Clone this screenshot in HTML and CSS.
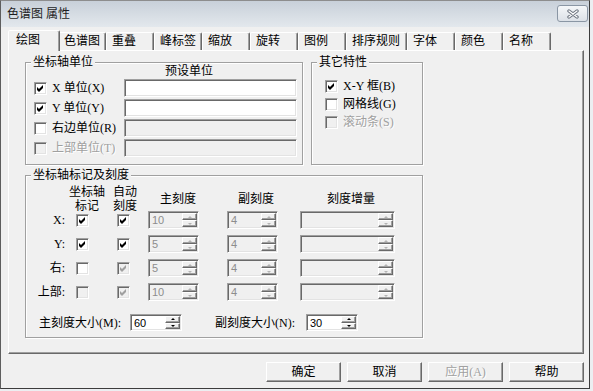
FILE: index.html
```html
<!DOCTYPE html>
<html lang="zh-CN">
<head>
    <meta charset="UTF-8">
    <title>色谱图 属性</title>
    <link rel="stylesheet" href="styles.css">
</head>
<body>
<div class="window">
    <div class="frame">
        <div class="titlebar">
            <span class="title">色谱图 属性</span>
            <button class="close" title="关闭">
                <svg width="14" height="10" viewBox="0 0 14 10">
                    <path d="M3 2 L11 8 M11 2 L3 8" stroke="#6d7580" stroke-width="3.4" stroke-linecap="round"/>
                    <path d="M3 2 L11 8 M11 2 L3 8" stroke="#fff" stroke-width="1.3" stroke-linecap="round"/>
                </svg>
            </button>
        </div>

        <div class="content">
            <div class="tabs">
                <span class="tab active">绘图</span>
                <span class="tab">色谱图</span>
                <span class="tab">重叠</span>
                <span class="tab">峰标签</span>
                <span class="tab">缩放</span>
                <span class="tab">旋转</span>
                <span class="tab">图例</span>
                <span class="tab wide">排序规则</span>
                <span class="tab">字体</span>
                <span class="tab">颜色</span>
                <span class="tab">名称</span>
            </div>

            <div class="panel">
                <div class="top-row">
                    <!-- 坐标轴单位 -->
                    <div class="group units">
                        <div class="group-title">坐标轴单位</div>
                        <div class="units-body">
                            <span class="col-head">预设单位</span>
                            <label class="check"><span class="box"><svg class="tick" viewBox="0 0 11 11"><polygon points="2,4 4,6 8,2 8,5 4,9 2,7"/></svg></span>X 单位(X)</label>
                            <span class="field"></span>
                            <label class="check"><span class="box"><svg class="tick" viewBox="0 0 11 11"><polygon points="2,4 4,6 8,2 8,5 4,9 2,7"/></svg></span>Y 单位(Y)</label>
                            <span class="field"></span>
                            <label class="check"><span class="box"></span>右边单位(R)</label>
                            <span class="field off"></span>
                            <label class="check off"><span class="box off"></span>上部单位(T)</label>
                            <span class="field off"></span>
                        </div>
                    </div>

                    <!-- 其它特性 -->
                    <div class="group other">
                        <div class="group-title">其它特性</div>
                        <div class="other-body">
                            <label class="check"><span class="box"><svg class="tick" viewBox="0 0 11 11"><polygon points="2,4 4,6 8,2 8,5 4,9 2,7"/></svg></span>X-Y 框(B)</label>
                            <label class="check"><span class="box"></span>网格线(G)</label>
                            <label class="check off"><span class="box off"></span>滚动条(S)</label>
                        </div>
                    </div>
                </div>

                <!-- 坐标轴标记及刻度 -->
                <div class="group ticks">
                    <div class="group-title">坐标轴标记及刻度</div>
                    <div class="ticks-body">
                        <span></span>
                        <span class="th">坐标轴<br>标记</span>
                        <span class="th">自动<br>刻度</span>
                        <span class="th">主刻度</span>
                        <span class="th">副刻度</span>
                        <span class="th">刻度增量</span>

                        <span class="cell c-lab">X:</span>
                        <span class="cell c-cb1"><span class="box"><svg class="tick" viewBox="0 0 11 11"><polygon points="2,4 4,6 8,2 8,5 4,9 2,7"/></svg></span></span>
                        <span class="cell c-cb2"><span class="box"><svg class="tick" viewBox="0 0 11 11"><polygon points="2,4 4,6 8,2 8,5 4,9 2,7"/></svg></span></span>
                        <span class="cell c-main"><span class="spin"><span class="spin-val">10</span><span class="spin-btns"><span class="sb up"></span><span class="sb down"></span></span></span></span>
                        <span class="cell c-minor"><span class="spin"><span class="spin-val">4</span><span class="spin-btns"><span class="sb up"></span><span class="sb down"></span></span></span></span>
                        <span class="cell c-inc"><span class="spin inc"><span class="spin-val"></span><span class="spin-btns"><span class="sb up"></span><span class="sb down"></span></span></span></span>

                        <span class="cell c-lab">Y:</span>
                        <span class="cell c-cb1"><span class="box"><svg class="tick" viewBox="0 0 11 11"><polygon points="2,4 4,6 8,2 8,5 4,9 2,7"/></svg></span></span>
                        <span class="cell c-cb2"><span class="box"><svg class="tick" viewBox="0 0 11 11"><polygon points="2,4 4,6 8,2 8,5 4,9 2,7"/></svg></span></span>
                        <span class="cell c-main"><span class="spin"><span class="spin-val">5</span><span class="spin-btns"><span class="sb up"></span><span class="sb down"></span></span></span></span>
                        <span class="cell c-minor"><span class="spin"><span class="spin-val">4</span><span class="spin-btns"><span class="sb up"></span><span class="sb down"></span></span></span></span>
                        <span class="cell c-inc"><span class="spin inc"><span class="spin-val"></span><span class="spin-btns"><span class="sb up"></span><span class="sb down"></span></span></span></span>

                        <span class="cell c-lab">右:</span>
                        <span class="cell c-cb1"><span class="box"></span></span>
                        <span class="cell c-cb2"><span class="box off"><svg class="tick" viewBox="0 0 11 11"><polygon points="2,4 4,6 8,2 8,5 4,9 2,7"/></svg></span></span>
                        <span class="cell c-main"><span class="spin"><span class="spin-val">5</span><span class="spin-btns"><span class="sb up"></span><span class="sb down"></span></span></span></span>
                        <span class="cell c-minor"><span class="spin"><span class="spin-val">4</span><span class="spin-btns"><span class="sb up"></span><span class="sb down"></span></span></span></span>
                        <span class="cell c-inc"><span class="spin inc"><span class="spin-val"></span><span class="spin-btns"><span class="sb up"></span><span class="sb down"></span></span></span></span>

                        <span class="cell c-lab">上部:</span>
                        <span class="cell c-cb1"><span class="box off"></span></span>
                        <span class="cell c-cb2"><span class="box off"><svg class="tick" viewBox="0 0 11 11"><polygon points="2,4 4,6 8,2 8,5 4,9 2,7"/></svg></span></span>
                        <span class="cell c-main"><span class="spin"><span class="spin-val">10</span><span class="spin-btns"><span class="sb up"></span><span class="sb down"></span></span></span></span>
                        <span class="cell c-minor"><span class="spin"><span class="spin-val">4</span><span class="spin-btns"><span class="sb up"></span><span class="sb down"></span></span></span></span>
                        <span class="cell c-inc"><span class="spin inc"><span class="spin-val"></span><span class="spin-btns"><span class="sb up"></span><span class="sb down"></span></span></span></span>
                    </div>

                    <div class="size-row">
                        <span class="size-label">主刻度大小(M):</span>
                        <span class="spin on size"><span class="spin-val">60</span><span class="spin-btns"><span class="sb up"></span><span class="sb down"></span></span></span>
                        <span class="size-label second">副刻度大小(N):</span>
                        <span class="spin on size"><span class="spin-val">30</span><span class="spin-btns"><span class="sb up"></span><span class="sb down"></span></span></span>
                    </div>
                </div>
            </div>

            <div class="buttons">
                <button class="btn">确定</button>
                <button class="btn">取消</button>
                <button class="btn disabled">应用(A)</button>
                <button class="btn">帮助</button>
            </div>
        </div>
    </div>
</div>
</body>
</html>
```

FILE: styles.css
```css
* {
    box-sizing: border-box;
}

body {
    margin: 0;
    background: #eceef1;
    font-family: "Liberation Serif", "Noto Sans CJK SC", serif;
    font-size: 12px;
    line-height: 14px;
    color: #000;
}

.window {
    width: 593px;
    height: 391px;
    background: #eceef1;
}

.frame {
    width: 590px;
    height: 389px;
    display: flex;
    flex-direction: column;
    background: #f0f0f0;
    border: 1px solid;
    border-color: #8d8d8d #3c3c3c #3c3c3c #5e5e5e;
}

/* 标题栏 */
.titlebar {
    height: 26px;
    display: flex;
    justify-content: space-between;
    align-items: flex-start;
    padding: 0 1px 0 6px;
    background: linear-gradient(#c8d0d9, #e3e8ed);
}

.title {
    margin-top: 6px;
    color: #1e1e1e;
}

.close {
    margin-top: 4px;
    width: 31px;
    height: 17px;
    padding: 0;
    display: flex;
    align-items: center;
    justify-content: center;
    border: 1px solid #8a96a4;
    border-radius: 3px;
    background: linear-gradient(#f5f7f9, #dce1e7);
}

.content {
    flex: 1;
    padding: 3px 5px 0 7px;
}

/* 选项卡 */
.tabs {
    display: flex;
    align-items: flex-end;
    height: 20px;
    padding-left: 2px;
}

.tab {
    min-width: 48px;
    height: 18px;
    padding: 1px 5px 0;
    border: 1px solid;
    border-bottom: none;
    border-color: #fff #696969 transparent #fff;
    border-radius: 2px 2px 0 0;
    box-shadow: inset -1px 0 #a0a0a0;
    white-space: nowrap;
}

.tab.wide {
    padding-right: 6px;
}

.tab.active {
    position: relative;
    z-index: 1;
    min-width: 52px;
    height: 21px;
    margin: 0 -2px -1px;
    padding: 2px 5px 0 7px;
    background: #f0f0f0;
}

.panel {
    height: 304px;
    padding: 11px 0 0 16px;
    border: 1px solid;
    border-color: #fff #696969 #696969 #fff;
    box-shadow: inset -1px -1px #a0a0a0;
}

.top-row {
    display: flex;
    gap: 8px;
}

/* 分组框 */
.group {
    border: 1px solid #a0a0a0;
    box-shadow: inset 1px 1px #fff, 1px 1px #fff;
}

.group-title {
    width: fit-content;
    margin: -8px 0 -6px 5px;
    padding: 0 2px;
    background: #f0f0f0;
    line-height: 14px;
}

.units {
    width: 278px;
    height: 103px;
}

.other {
    width: 112px;
    height: 103px;
}

.ticks {
    width: 398px;
    height: 163px;
    margin-top: 10px;
}

.units-body {
    display: grid;
    grid-template-columns: 90px 173px;
    grid-template-rows: 13px repeat(4, 18px);
    row-gap: 2px;
    padding: 1px 0 0 8px;
}

.col-head {
    grid-column: 2;
    padding-left: 41px;
}

.other-body {
    display: flex;
    flex-direction: column;
    padding: 14px 0 0 13px;
}

.other-body .check {
    height: 18px;
}

/* 复选框 */
.check {
    display: flex;
    align-items: center;
    gap: 5px;
    white-space: nowrap;
}

.check.off {
    color: #a0a0a0;
    text-shadow: 1px 1px #fff;
}

.box {
    width: 13px;
    height: 13px;
    flex: none;
    display: block;
    background: #fff;
    border: 1px solid;
    border-color: #a0a0a0 #fff #fff #a0a0a0;
    box-shadow: inset 1px 1px #696969, inset -1px -1px #e3e3e3;
    color: #000;
}

.box.off {
    background: #f0f0f0;
    color: #a0a0a0;
}

.tick {
    display: block;
    width: 11px;
    height: 11px;
    fill: currentColor;
}

/* 输入框 */
.field {
    height: 18px;
    background: #fff;
    border: 1px solid;
    border-color: #a0a0a0 #fff #fff #a0a0a0;
    box-shadow: inset 1px 1px #696969, inset -1px -1px #e3e3e3;
}

.field.off {
    background: #f0f0f0;
}

/* 刻度表格 */
.ticks-body {
    display: grid;
    grid-template-columns: 40px 42px 34px 72px 84px 106px;
    grid-template-rows: 25px repeat(4, 24px);
    align-items: start;
    padding-top: 10px;
}

.th {
    height: 25px;
    display: flex;
    align-items: center;
    justify-content: center;
    text-align: center;
    line-height: 14px;
}

.cell {
    height: 18px;
    display: flex;
    align-items: center;
}

.c-lab {
    justify-content: flex-end;
    padding-right: 1px;
}

.c-cb1 {
    padding-left: 10px;
}

.c-cb2 {
    padding-left: 9px;
}

.c-main {
    padding-left: 6px;
}

.c-minor {
    padding-left: 13px;
}

.c-inc {
    padding-left: 2px;
}

/* 微调框 */
.spin {
    width: 51px;
    height: 18px;
    display: flex;
    background: #f0f0f0;
    border: 1px solid;
    border-color: #a0a0a0 #fff #fff #a0a0a0;
    box-shadow: inset 1px 1px #696969, inset -1px -1px #e3e3e3;
}

.spin.inc {
    width: 95px;
}

.spin.on {
    background: #fff;
}

.spin.size {
    width: 52px;
    height: 17px;
}

.spin-val {
    flex: 1;
    padding: 1px 0 0 3px;
    font-family: "Liberation Sans", sans-serif;
    font-size: 11px;
    line-height: 14px;
    color: #8d8d8d;
}

.spin.on .spin-val {
    color: #000;
}

.spin-btns {
    width: 16px;
    display: flex;
    flex-direction: column;
    padding: 1px 1px 1px 0;
}

.sb {
    flex: 1;
    display: flex;
    align-items: center;
    justify-content: center;
    background: #f0f0f0;
    border: 1px solid;
    border-color: #fff #696969 #696969 #fff;
    box-shadow: inset -1px -1px #a0a0a0;
}

.sb::after {
    content: "";
    border-left: 2px solid transparent;
    border-right: 2px solid transparent;
}

.sb.up::after {
    border-bottom: 2px solid #b4b4b4;
}

.sb.down::after {
    border-top: 2px solid #b4b4b4;
}

.spin.on .sb.up::after {
    border-bottom-color: #000;
}

.spin.on .sb.down::after {
    border-top-color: #000;
}

.size-row {
    display: flex;
    align-items: center;
    height: 17px;
    margin-top: 7px;
    padding-left: 13px;
}

.size-label {
    width: 86px;
    margin-right: 5px;
    white-space: nowrap;
}

.size-label.second {
    margin-left: 33px;
}

/* 底部按钮 */
.buttons {
    display: flex;
    justify-content: flex-end;
    gap: 6px;
    margin-top: 8px;
}

.btn {
    width: 75px;
    height: 20px;
    padding: 0;
    font: inherit;
    color: #000;
    background: #f0f0f0;
    border: 1px solid;
    border-color: #fff #696969 #696969 #fff;
    box-shadow: inset -1px -1px #a0a0a0;
}

.btn.disabled {
    color: #a0a0a0;
    text-shadow: 1px 1px #fff;
}
```
